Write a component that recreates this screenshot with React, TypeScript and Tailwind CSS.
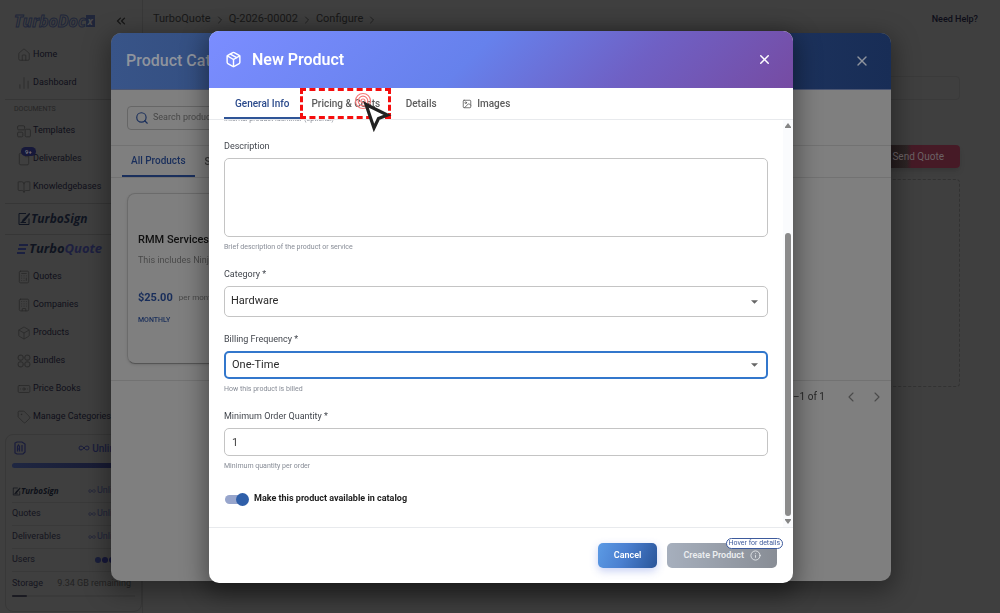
import React from "react";
import {
  Home,
  ChartNoAxesColumn,
  File,
  BookOpen,
  Calculator,
  Building,
  Box,
  Banknote,
  Tag,
  ChevronsLeft,
  ChevronLeft,
  ChevronRight,
  Search,
  X,
  Image,
  Info,
  Package,
  Infinity as InfinityIcon,
} from "lucide-react";

type IconType = React.ComponentType<{ className?: string; strokeWidth?: number }>;

function TemplatesIcon({ className }: { className?: string }) {
  return (
    <svg viewBox="0 0 24 24" fill="none" stroke="currentColor" strokeWidth={1.4} className={className}>
      <rect x="1" y="3" width="12" height="7" rx="2" />
      <rect x="1" y="14" width="9" height="8" rx="2" />
      <rect x="14" y="9" width="9" height="13" rx="2" />
    </svg>
  );
}

function BundlesIcon({ className }: { className?: string }) {
  return (
    <svg viewBox="0 0 24 24" fill="none" stroke="currentColor" strokeWidth={1.5} className={className}>
      <rect x="2" y="2" width="8.500" height="8.500" rx="3.200" />
      <rect x="13.500" y="2" width="8.500" height="8.500" rx="3.200" />
      <rect x="2" y="13.500" width="8.500" height="8.500" rx="3.200" />
      <rect x="13.500" y="13.500" width="8.500" height="8.500" rx="3.200" />
    </svg>
  );
}

function SignIcon({ className }: { className?: string }) {
  return (
    <svg viewBox="0 0 26 28" fill="none" stroke="currentColor" strokeWidth={2} className={className}>
      <path d="M17 3H3v22h20V13" />
      <path d="M24 2 11 15l-3 6 6-3L25 4" fill="currentColor" strokeWidth={1} />
      <path d="M6 21h11" strokeWidth={2} />
    </svg>
  );
}

function SideItem({ icon: Icon, label, badge }: { icon: IconType; label: string; badge?: string }) {
  return (
    <a href="#" className="flex h-7 items-center gap-[2px] pl-[17px] text-[9px] whitespace-nowrap text-[#0f0f1a]">
      <span className="relative flex">
        <Icon className="size-[14px] text-[#272727]" strokeWidth={1.3} />
        {badge && (
          <span className="absolute -top-[5px] left-1 rounded-full bg-[#16183a] px-1 text-[6px] leading-[9px] font-medium text-[#77777f]">
            {badge}
          </span>
        )}
      </span>
      {label}
    </a>
  );
}

function UsageRow({ label, children, last }: { label: React.ReactNode; children: React.ReactNode; last?: boolean }) {
  return (
    <div
      className={
        "flex h-[23px] items-center justify-between text-[9px] text-[#14141e] " +
        (last ? "" : "border-b border-[#393939]")
      }
    >
      <span>{label}</span>
      {children}
    </div>
  );
}

function Unlimited() {
  return (
    <span className="flex items-center gap-px text-[9px] text-[#20233a]">
      <InfinityIcon className="size-2" />
      Unlimited
    </span>
  );
}

function Sidebar() {
  return (
    <aside className="flex w-[143px] shrink-0 flex-col border-r border-[#383838]">
      <div className="flex h-[41px] items-center justify-between pr-[14px] pl-[14px]">
        <span className="flex items-center font-['Open_Sans',sans-serif] text-[16px] leading-none font-bold text-[#3f3f3f] italic [-webkit-text-stroke:1px_#20263a]">
          TurboDoc
          <span className="flex h-3 w-[9px] items-center justify-center bg-[#20263a] text-[10px] text-[#4a4a4a] [-webkit-text-stroke:0px]">
            x
          </span>
        </span>
        <button type="button" aria-label="Collapse sidebar">
          <ChevronsLeft className="size-[14px] text-[#141414]" strokeWidth={2} />
        </button>
      </div>
      <nav>
        <SideItem icon={Home} label="Home" />
        <SideItem icon={ChartNoAxesColumn} label="Dashboard" />
        <div className="mt-[2px] ml-[5px] border-t border-[#363636] pt-1 pb-[3px] pl-[9px] text-[7px] leading-[10px] text-[#252525]">
          DOCUMENTS
        </div>
        <SideItem icon={TemplatesIcon} label="Templates" />
        <SideItem icon={File} label="Deliverables" badge="9+" />
        <SideItem icon={BookOpen} label="Knowledgebases" />
        <div className="mt-[2px] ml-[5px] flex h-8 items-center border-y border-[#363636] pl-3 font-['Open_Sans',sans-serif] text-[12px] font-bold text-[#0f1420] italic">
          <SignIcon className="size-[14px]" />
          TurboSign
        </div>
        <div className="flex h-7 items-center gap-px pl-[17px] font-['Open_Sans',sans-serif] text-[13px] font-bold text-[#0f1420] italic">
          <svg viewBox="0 0 11 12" className="h-3 w-[11px]" fill="none" stroke="#1b2040" strokeWidth="1.8">
            <path d="M2 2h9M1 6h8M0 10h8" />
          </svg>
          <span>
            Turbo<span className="text-[#1d2040]">Quote</span>
          </span>
        </div>
        <SideItem icon={Calculator} label="Quotes" />
        <SideItem icon={Building} label="Companies" />
        <SideItem icon={Box} label="Products" />
        <SideItem icon={BundlesIcon} label="Bundles" />
        <SideItem icon={Banknote} label="Price Books" />
        <SideItem icon={Tag} label="Manage Categories" />
      </nav>
      <section className="mt-[3px] ml-[5px] h-[178px] rounded-lg border border-[#383838] px-[6px] pt-[5px]">
        <div className="flex h-4 items-center justify-between pl-[2px] text-[#191c3c]">
          <svg viewBox="0 0 12 14" className="h-[14px] w-3" fill="none" stroke="currentColor" strokeWidth="1.2">
            <path d="M3 1h5l3 2v8l-2 2H3l-2-1V2z" />
            <path d="M3.500 10.500V5.500l1-1.500 1 1.500v5M3.500 8h2M8 4v6.500" />
          </svg>
          <span className="flex items-center gap-[2px] text-[10px] font-medium">
            <InfinityIcon className="size-3" />
            Unlimited
          </span>
        </div>
        <div className="mt-[7px] mb-3 h-[5px] rounded-full bg-gradient-to-r from-[#1f2742] to-[#15172f]" />
        <UsageRow
          label={
            <span className="flex items-center font-['Open_Sans',sans-serif] text-[8px] font-bold text-[#0d1018] italic">
              <SignIcon className="size-[9px]" />
              TurboSign
            </span>
          }
        >
          <Unlimited />
        </UsageRow>
        <UsageRow label="Quotes">
          <Unlimited />
        </UsageRow>
        <UsageRow label="Deliverables">
          <Unlimited />
        </UsageRow>
        <UsageRow label="Users">
          <span className="mr-5 flex gap-px">
            <span className="size-[6px] rounded-full bg-[#1a1f3c]" />
            <span className="size-[6px] rounded-full bg-[#16183a]" />
            <span className="size-[6px] rounded-full bg-[#16183a]" />
          </span>
        </UsageRow>
        <UsageRow label="Storage" last>
          <span className="pr-1 text-[#222]">9.34 GB remaining</span>
        </UsageRow>
        <div className="h-[2px] bg-[#3a3a3a]">
          <div className="h-full w-1/8 rounded-full bg-[#1b1b22]" />
        </div>
      </section>
    </aside>
  );
}

function QuotePage() {
  return (
    <main className="flex min-w-0 flex-1 flex-col">
      <header className="flex h-[39px] items-center justify-between pr-[22px] pl-[10px]">
        <nav className="flex items-center gap-[3px] text-[11px] text-[#181818]">
          <a href="#">TurboQuote</a>
          <ChevronRight className="size-3 text-[#222]" />
          <a href="#">Q-2026-00002</a>
          <ChevronRight className="size-3 text-[#222]" />
          <a href="#">Configure</a>
          <ChevronRight className="size-3 text-[#222]" />
        </nav>
        <a href="#" className="text-[9px] font-medium text-[#0d0d18]">
          Need Help?
        </a>
      </header>
      <div className="flex flex-col px-10 pt-[37px]">
        <div className="h-6 rounded border border-[#3a3a3a]" />
        <button
          type="button"
          className="mt-[45px] h-[23px] self-end rounded bg-[linear-gradient(90deg,#1f1618_40%,#2c2424_58%,#461a26_62%)] px-4 text-[10px] text-[#6c6265] shadow-md"
        >
          Save and Send Quote
        </button>
        <div className="mt-[11px] h-[208px] rounded border border-dashed border-[#323232]" />
      </div>
    </main>
  );
}

function CatalogDialog() {
  return (
    <div className="fixed inset-0 flex justify-center pt-[33px] pb-8 pl-[2px]">
      <section className="flex w-[780px] max-w-full flex-col overflow-hidden rounded-[10px] bg-[#7f7f7f] shadow-[0_7px_25px_4px_rgba(0,0,0,0.35)]">
        <header className="flex h-[57px] shrink-0 items-center justify-between border-b border-[#4c5672] bg-gradient-to-r from-[#385488] to-[#182d56] px-[15px]">
          <h2 className="text-[16px] font-medium text-[#8f949d]">Product Catalog</h2>
          <button type="button" aria-label="Close catalog" className="pr-[6px]">
            <X className="size-4 text-[#8f949d]" strokeWidth={2} />
          </button>
        </header>
        <div className="shrink-0 border-b border-[#727272] px-4 pt-4 pb-[15px]">
          <label className="flex h-6 w-64 items-center gap-1 rounded border border-[#666] px-[7px]">
            <Search className="size-[14px] text-[#1a2f5c]" strokeWidth={2} />
            <input
              type="text"
              aria-label="Search products"
              placeholder="Search products..."
              className="min-w-0 flex-1 text-[9px] outline-none placeholder:text-[#484848]"
            />
          </label>
        </div>
        <div className="flex h-8 shrink-0 border-b border-[#727272] px-[11px] text-[10px] font-medium">
          <button type="button" className="border-b-2 border-[#1a2f5c] px-[9px] text-[#1a2f5c]">
            All Products
          </button>
          <button type="button" className="px-[10px] text-[#333]">
            Software
          </button>
        </div>
        <div className="flex-1 p-4 pt-[15px]">
          <article className="flex h-[171px] w-60 flex-col items-start rounded-lg border border-[#6b6b6b] border-b-[#555] px-[10px] pt-10 shadow">
            <h3 className="text-[11px] leading-3 font-medium text-[#101010]">RMM Services</h3>
            <p className="mt-2 text-[9px] leading-3 whitespace-nowrap text-[#494949]">This includes Ninja monitoring</p>
            <p className="mt-[25px] flex items-center gap-[6px] leading-[14px]">
              <strong className="text-[11px] font-bold text-[#182d5a]">$25.00</strong>
              <span className="text-[8px] text-[#484848]">per month</span>
            </p>
            <p className="mt-[10px] text-[7px] leading-[10px] font-medium text-[#182d5a]">MONTHLY</p>
          </article>
        </div>
        <footer className="flex h-[203px] shrink-0 items-start justify-end gap-[18px] border-t border-[#727272] pt-2 pr-[6px] text-[10px] text-[#262626]">
          <span className="leading-4">1–1 of 1</span>
          <span className="flex gap-[10px]">
            <button type="button" aria-label="Previous page">
              <ChevronLeft className="size-4 text-[#4a4a4a]" strokeWidth={1.6} />
            </button>
            <button type="button" aria-label="Next page">
              <ChevronRight className="size-4 text-[#4a4a4a]" strokeWidth={1.6} />
            </button>
          </span>
        </footer>
      </section>
    </div>
  );
}

function Caret() {
  return (
    <svg viewBox="0 0 8 4" className="pointer-events-none absolute top-1/2 right-[10px] h-1 w-[7px] -translate-y-1/2" fill="#666">
      <path d="M0 0h8L4 4z" />
    </svg>
  );
}

const labelClass = "text-[9px] leading-3 text-[#43474e]";
const hintClass = "mt-1 text-[7px] leading-3 text-[#878c96]";

function ProductForm() {
  return (
    <form className="flex shrink-0 flex-col px-[15px] pb-[21px]">
      <p className={hintClass}>Internal product identifier (optional)</p>

      <label htmlFor="description" className={labelClass + " mt-[15px]"}>
        Description
      </label>
      <textarea
        id="description"
        className="mt-[6px] h-[79px] resize-none rounded-[5px] border border-[#c4c4c4] p-[6px] text-[11px] outline-none"
      />
      <p className={hintClass}>Brief description of the product or service</p>

      <label htmlFor="category" className={labelClass + " mt-[15px]"}>
        Category *
      </label>
      <div className="relative mt-[6px] flex">
        <select
          id="category"
          defaultValue="Hardware"
          className="h-[31px] flex-1 appearance-none rounded-[5px] border border-[#c4c4c4] bg-white px-[6px] text-[11px] text-[#2a2a2a] outline-none"
        >
          <option>Hardware</option>
          <option>Software</option>
        </select>
        <Caret />
      </div>

      <label htmlFor="billing" className={labelClass + " mt-4"}>
        Billing Frequency *
      </label>
      <div className="relative mt-[6px] flex">
        <select
          id="billing"
          defaultValue="One-Time"
          className="h-7 flex-1 appearance-none rounded-[5px] border-2 border-[#3277cc] bg-white px-[6px] text-[11px] text-[#2a2a2a] outline-none"
        >
          <option>One-Time</option>
          <option>Monthly</option>
        </select>
        <Caret />
      </div>
      <p className={hintClass}>How this product is billed</p>

      <label htmlFor="quantity" className={labelClass + " mt-[15px]"}>
        Minimum Order Quantity *
      </label>
      <input
        id="quantity"
        type="text"
        inputMode="numeric"
        defaultValue="1"
        className="mt-[6px] h-7 rounded-[5px] border border-[#c4c4c4] px-[7px] text-[11px] text-[#444] outline-none"
      />
      <p className={hintClass}>Minimum quantity per order</p>

      <label className="mt-5 flex h-[14px] items-center gap-[5px] text-[9px] font-bold text-[#1c1c1c]">
        <input
          type="checkbox"
          role="switch"
          defaultChecked
          className="relative ml-px h-[9px] w-6 appearance-none bg-transparent before:absolute before:inset-y-0 before:left-0 before:w-5 before:rounded-full before:bg-[#97a5cc] after:absolute after:-top-[2px] after:right-0 after:size-[13px] after:rounded-full after:bg-[#2f5fa9]"
        />
        Make this product available in catalog
      </label>
    </form>
  );
}

function Scrollbar() {
  return (
    <div aria-hidden="true" className="flex w-[10px] shrink-0 flex-col items-center bg-[#fafbfd] py-[3px]">
      <svg viewBox="0 0 6 5" className="h-[5px] w-[6px]" fill="#858585">
        <path d="M3 0 6 4v1H0V4z" />
      </svg>
      <div className="flex w-[6px] flex-1 flex-col justify-end pb-[3px]">
        <div className="h-[73%] rounded-full bg-[#8b8b8b]" />
      </div>
      <svg viewBox="0 0 6 5" className="h-[5px] w-[6px]" fill="#858585">
        <path d="M3 5 6 1V0H0v1z" />
      </svg>
    </div>
  );
}

function ClickPointer() {
  return (
    <svg viewBox="0 0 40 42" className="pointer-events-none absolute top-[2px] left-[53px] h-[42px] w-10" fill="none">
      <g stroke="#f47a7a" strokeWidth="1.2">
        <circle cx="10" cy="11" r="7.500" />
        <circle cx="10" cy="11" r="4.800" />
        <circle cx="10" cy="11" r="2" />
      </g>
      <path d="M13 14.500 34.500 25l-9 3.500-4.500 9.500z" fill="#fff" stroke="#222" strokeWidth="3.200" strokeLinejoin="miter" />
    </svg>
  );
}

function NewProductDialog() {
  const tab = "flex min-w-[60px] items-center justify-center px-[11px] text-[#5c5c5c]";
  return (
    <div className="fixed inset-0 flex justify-center pt-[31px] pb-[30px] pl-[2px]">
      <section
        role="dialog"
        aria-label="New Product"
        className="flex w-[584px] flex-col overflow-hidden rounded-[10px] bg-white shadow-[0_7px_25px_4px_rgba(0,0,0,0.4)]"
      >
        <header className="flex h-[57px] shrink-0 items-center gap-[10px] bg-[linear-gradient(135deg,#7b8dff_0%,#6681ec_45%,#6f60c4_72%,#764ba2_100%)] pr-[21px] pl-4">
          <Package className="size-[17px] text-white" strokeWidth={2} />
          <h1 className="flex-1 text-[16px] font-semibold text-white">New Product</h1>
          <button type="button" aria-label="Close">
            <X className="size-[15px] text-white" strokeWidth={2.4} />
          </button>
        </header>

        <div className="flex h-8 shrink-0 border-b border-[#e8eaed] px-[15px] text-[10px] font-medium">
          <button type="button" className="border-b-2 border-[#2f5597] px-[11px] pt-[2px] text-[#2b4a8b]">
            General Info
          </button>
          <div className="relative flex">
            <button type="button" className={tab}>
              Pricing &amp; Costs
            </button>
            <span className="pointer-events-none absolute inset-0 border-[3px] border-dashed border-[#f50d0d]" />
            <ClickPointer />
          </div>
          <button type="button" className={tab}>
            Details
          </button>
          <button type="button" className={tab + " gap-[5px]"}>
            <Image className="size-[10px]" strokeWidth={2} />
            Images
          </button>
        </div>

        <div className="flex min-h-0 flex-1">
          <div className="flex min-w-0 flex-1 flex-col justify-end overflow-hidden">
            <ProductForm />
          </div>
          <Scrollbar />
        </div>

        <footer className="flex h-14 shrink-0 items-center justify-end gap-[10px] border-t border-[#e8eaed] pr-4">
          <button
            type="button"
            className="h-[25px] rounded-[5px] bg-[linear-gradient(110deg,#5c9be5,#4a7fd0_45%,#2a5599)] px-4 text-[9px] font-semibold text-white shadow-[0_3px_8px_rgba(70,100,220,0.3)]"
          >
            Cancel
          </button>
          <div className="relative flex">
            <button
              type="button"
              disabled
              className="flex h-[25px] items-center gap-[6px] rounded-[5px] bg-gradient-to-r from-[#a6afbd] to-[#888d95] px-4 text-[9px] font-semibold text-[#eceef0]"
            >
              Create Product
              <Info className="size-[11px]" strokeWidth={1.8} />
            </button>
            <span className="absolute -top-[5px] -right-[6px] rounded-full border border-[#3d5a9c] bg-white px-[2px] text-[7px] leading-[9px] whitespace-nowrap text-[#3d5a9c]">
              Hover for details
            </span>
          </div>
        </footer>
      </section>
    </div>
  );
}

export default function App() {
  return (
    <div className="flex h-screen overflow-hidden bg-[#3f3f3f] font-[Roboto,sans-serif]">
      <Sidebar />
      <QuotePage />
      <CatalogDialog />
      <NewProductDialog />
    </div>
  );
}
